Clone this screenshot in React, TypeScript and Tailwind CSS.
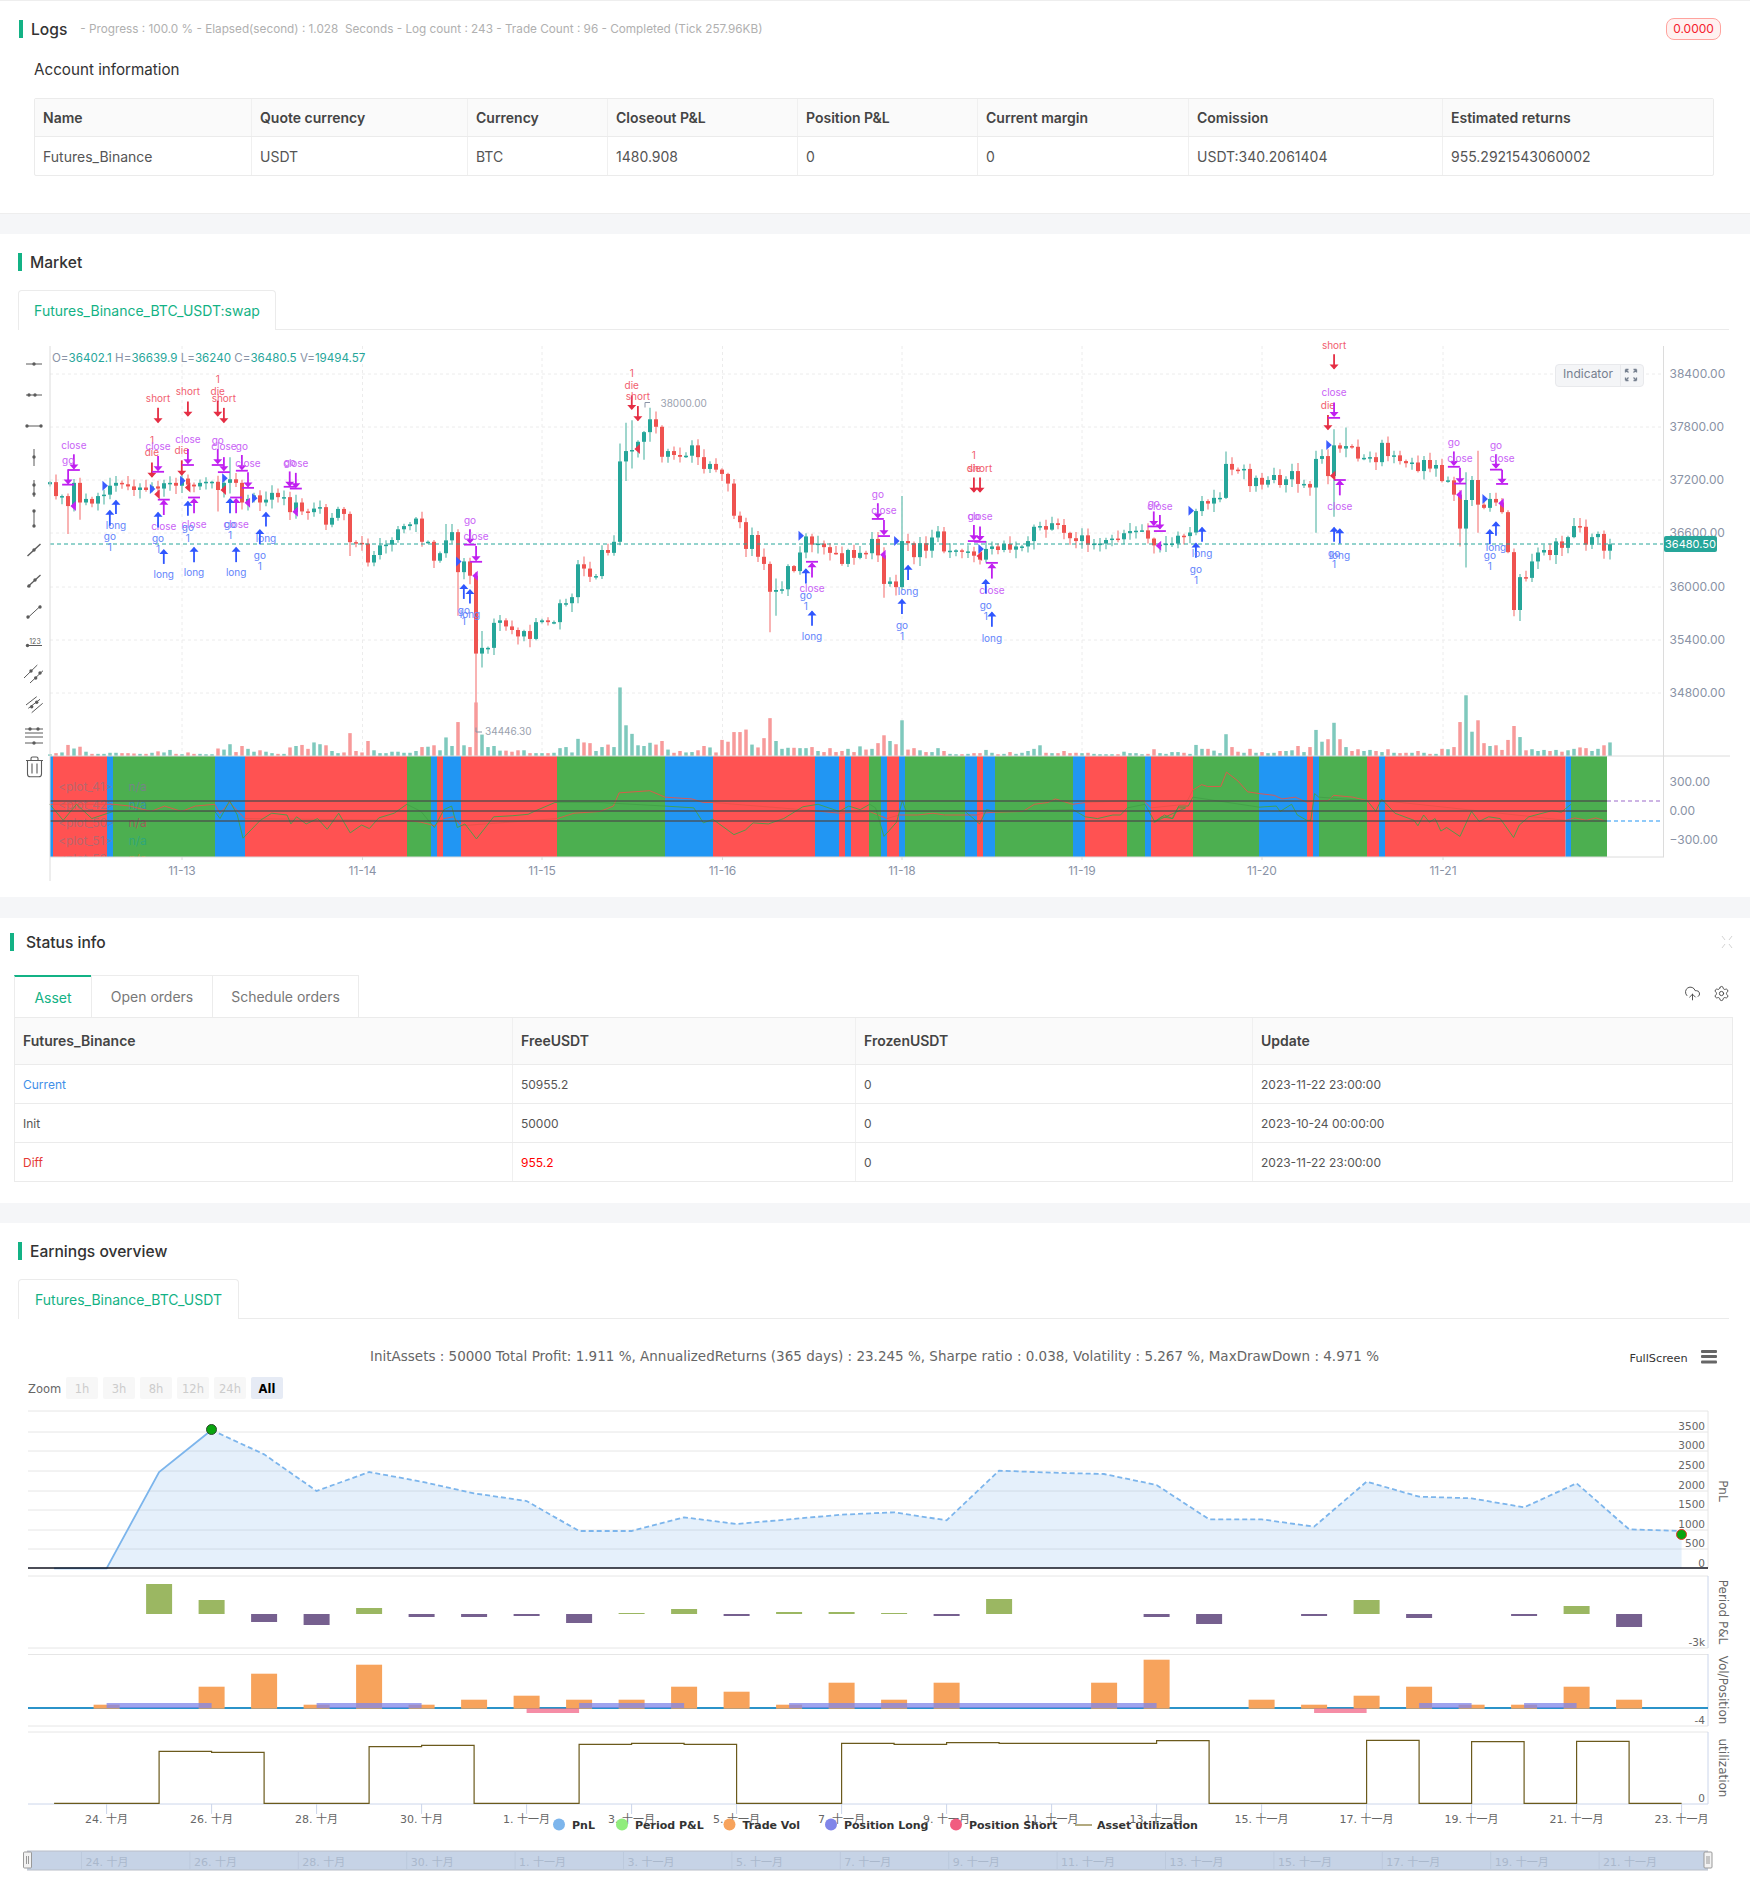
import { Fragment } from "react";
import { CloudUpload, Settings } from "lucide-react";

// ---- market chart data (read off the picture, y values in crop units: real y = 340 + v / 2.8)
const closes = [
  398, 437, 437, 465, 400, 455, 445, 458, 437, 433, 408, 400, 404, 410, 420, 413, 420, 410, 416, 401,
  400, 408, 388, 405, 410, 400, 397, 397, 420, 400, 390, 400, 455, 445, 435, 455, 447, 428, 440, 440,
  482, 455, 480, 482, 472, 468, 517, 498, 473, 487, 566, 568, 570, 623, 602, 575, 573, 560, 530, 521,
  516, 500, 565, 565, 618, 597, 561, 538, 650, 620, 660, 878, 862, 862, 792, 785, 802, 812, 830, 815,
  837, 790, 785, 790, 790, 737, 737, 720, 628, 640, 663, 661, 588, 596, 565, 340, 311, 308, 285, 258,
  222, 243, 327, 311, 322, 327, 324, 295, 328, 361, 347, 363, 375, 402, 492, 510, 585, 546, 607, 627,
  705, 700, 698, 633, 647, 595, 550, 573, 570, 580, 596, 597, 627, 588, 610, 596, 597, 557, 603, 683,
  676, 692, 563, 569, 608, 569, 590, 553, 536, 592, 590, 589, 592, 592, 604, 615, 585, 578, 588, 571,
  587, 578, 578, 563, 523, 521, 531, 513, 518, 540, 555, 563, 547, 573, 570, 570, 560, 556, 558, 541,
  535, 534, 533, 556, 575, 573, 570, 570, 548, 549, 539, 479, 451, 458, 442, 442, 347, 363, 365, 361,
  409, 386, 405, 392, 378, 406, 390, 367, 403, 403, 413, 333, 325, 381, 295, 304, 297, 299, 332, 330,
  328, 342, 288, 325, 323, 339, 345, 343, 367, 336, 360, 350, 395, 393, 433, 528, 448, 392, 461, 470,
  445, 455, 482, 594, 756, 664, 666, 620, 595, 588, 602, 564, 582, 552, 521, 523, 573, 552, 543, 590, 572,
];

const volumes = [
  5, 8, 10, 31, 21, 26, 12, 6, 6, 6, 9, 9, 8, 8, 7, 6, 6, 9, 13, 10, 17, 6, 5, 10, 6, 6, 5, 5, 21, 18,
  33, 11, 28, 20, 12, 16, 12, 8, 6, 6, 24, 28, 31, 20, 38, 33, 30, 14, 8, 10, 64, 14, 10, 42, 16, 8, 8, 12, 12, 9,
  9, 14, 25, 26, 30, 16, 52, 28, 95, 30, 25, 150, 60, 25, 28, 15, 15, 12, 16, 16, 8, 8, 8, 8, 9, 22, 25, 10, 48, 38,
  36, 14, 25, 32, 25, 192, 86, 62, 30, 28, 37, 32, 42, 18, 9, 14, 10, 11, 16, 28, 24, 10, 45, 40, 67, 67, 74, 32, 24, 50,
  106, 42, 20, 23, 23, 22, 22, 25, 14, 11, 22, 11, 14, 20, 11, 27, 18, 20, 36, 58, 42, 33, 100, 18, 22, 16, 11, 11, 22, 14,
  6, 5, 5, 6, 8, 8, 17, 9, 5, 6, 11, 6, 9, 14, 20, 30, 9, 8, 8, 14, 8, 9, 8, 9, 6, 5, 5, 5, 5, 12,
  8, 8, 5, 6, 19, 8, 6, 11, 11, 9, 6, 31, 20, 20, 15, 8, 61, 25, 12, 9, 20, 9, 11, 8, 9, 14, 14, 16, 28, 11,
  25, 73, 40, 47, 93, 47, 25, 14, 19, 14, 17, 14, 11, 19, 9, 8, 9, 9, 14, 9, 6, 6, 20, 19, 25, 95, 170, 68, 100, 36,
  28, 30, 17, 45, 84, 53, 16, 19, 14, 17, 14, 17, 12, 16, 20, 24, 22, 14, 20, 30, 38,
];

// wicks that stand out: index -> [high, low]
const wicks: Record<number, [number, number]> = {
  3: [430, 543], 5: [386, 503], 28: [380, 480], 30: [328, 430], 50: [480, 605], 66: [515, 610], 67: [515, 570],
  68: [530, 772], 71: [650, 1165], 72: [815, 917], 74: [780, 882], 95: [290, 575], 96: [232, 395], 97: [225, 360],
  99: [255, 335], 100: [190, 285], 120: [620, 818], 121: [668, 772], 139: [580, 722], 142: [437, 700],
  196: [312, 445], 211: [310, 540], 214: [250, 495], 216: [245, 328], 235: [420, 578], 236: [370, 637],
  238: [310, 540], 245: [655, 787],
};

const y = (v: number) => 340 + v / 2.8;
const seeded = (i: number) => {
  const s = Math.sin(i * 12.9898) * 43758.5453;
  return s - Math.floor(s);
};

const candles = closes.map((c, i) => {
  const o = i === 0 ? c + 6 : closes[i - 1];
  const top = Math.min(o, c);
  const bottom = Math.max(o, c);
  const w = wicks[i] ?? [top - 3 - seeded(i) * 20, bottom + 3 + seeded(i + 300) * 22];
  return { x: 50 + i * 6, up: c <= o, top, bottom, hi: w[0], lo: w[1], vol: volumes[i] ?? 6 };
});

const segments: [number, number, string][] = [
  [50, 53, "#2196f3"], [53, 107, "#ff5252"], [107, 113, "#2196f3"], [113, 215, "#4caf50"], [215, 245, "#2196f3"],
  [245, 407, "#ff5252"], [407, 431, "#4caf50"], [431, 437, "#2196f3"], [437, 443, "#ff5252"], [443, 461, "#2196f3"],
  [461, 557, "#ff5252"], [557, 665, "#4caf50"], [665, 713, "#2196f3"], [713, 815, "#ff5252"], [815, 839, "#2196f3"],
  [839, 845, "#ff5252"], [845, 851, "#2196f3"], [851, 869, "#ff5252"], [869, 881, "#4caf50"], [881, 887, "#2196f3"],
  [887, 899, "#ff5252"], [899, 905, "#2196f3"], [905, 965, "#4caf50"], [965, 977, "#2196f3"], [977, 983, "#ff5252"],
  [983, 995, "#2196f3"], [995, 1073, "#4caf50"], [1073, 1085, "#2196f3"], [1085, 1127, "#ff5252"], [1127, 1145, "#4caf50"],
  [1145, 1151, "#2196f3"], [1151, 1193, "#ff5252"], [1193, 1259, "#4caf50"], [1259, 1307, "#2196f3"], [1307, 1313, "#ff5252"],
  [1313, 1319, "#2196f3"], [1319, 1367, "#4caf50"], [1367, 1379, "#ff5252"], [1379, 1385, "#2196f3"], [1385, 1565.6, "#ff5252"],
  [1565.6, 1571, "#2196f3"], [1571, 1607, "#4caf50"],
];

const pts = (base: number, list: number[][]) => list.map(([a, b]) => `${base + a / 2.613},${y(b)}`).join(" ");

const greenLine = [
  pts(0, [[130, 1300], [165, 1345], [200, 1300], [240, 1340], [296, 1320], [561, 1320], [575, 1340], [600, 1290], [620, 1330], [635, 1395], [680, 1345], [710, 1325], [750, 1330], [760, 1355], [775, 1335], [800, 1355], [830, 1340], [855, 1370], [885, 1325], [915, 1380], [945, 1358], [965, 1368], [990, 1338], [1030, 1325], [1063, 1300], [1100, 1320], [1135, 1365], [1160, 1315], [1180, 1305], [1195, 1365], [1215, 1355], [1245, 1397], [1290, 1335], [1340, 1332], [1380, 1328], [1400, 1318], [1450, 1295]]),
  pts(600, [[0, 1295], [170, 1305], [245, 1310], [270, 1352], [295, 1342], [350, 1385], [380, 1372], [400, 1352], [440, 1355], [480, 1340], [530, 1307], [570, 1300], [625, 1320], [650, 1305], [680, 1315], [705, 1300], [720, 1310], [742, 1390], [775, 1350], [790, 1290], [800, 1320], [954, 1320], [992, 1355], [1010, 1315], [1032, 1320], [1236, 1315], [1268, 1335], [1300, 1340], [1340, 1330], [1360, 1330], [1378, 1310], [1424, 1300], [1450, 1350], [1475, 1330], [1495, 1340], [1510, 1310], [1530, 1310]]),
  pts(1150, [[10, 1350], [30, 1335], [60, 1340], [75, 1305], [100, 1305], [112, 1280], [285, 1308], [330, 1305], [340, 1320], [370, 1300], [385, 1330], [410, 1345], [420, 1345], [430, 1270], [441, 1280], [568, 1290], [590, 1320], [605, 1285], [640, 1325], [690, 1345], [700, 1360], [715, 1330], [730, 1350], [745, 1340], [760, 1375], [775, 1365], [810, 1390], [840, 1320], [860, 1348], [885, 1335], [915, 1340], [950, 1393], [965, 1358], [990, 1335], [1050, 1318], [1075, 1322], [1100, 1300]]),
].join(" ");

const redLine = [
  pts(0, [[130, 1300], [296, 1300], [340, 1305], [395, 1320], [430, 1305], [475, 1320], [510, 1305], [561, 1300], [575, 1325], [600, 1295], [640, 1340], [1063, 1345], [1100, 1350], [1135, 1360], [1160, 1340], [1185, 1335], [1205, 1360], [1456, 1340], [1500, 1325]]),
  pts(600, [[0, 1320], [35, 1305], [50, 1268], [130, 1262], [170, 1280], [240, 1285], [270, 1295], [296, 1295], [561, 1318], [625, 1325], [704, 1320], [750, 1340], [782, 1330], [830, 1330], [870, 1325], [900, 1330], [985, 1330], [1000, 1325], [1032, 1322], [1105, 1320], [1135, 1300], [1170, 1295], [1190, 1285], [1235, 1300], [1268, 1295], [1378, 1290], [1420, 1290], [1440, 1310], [1530, 1300]]),
  pts(1150, [[112, 1260], [135, 1245], [150, 1250], [185, 1250], [200, 1210], [230, 1235], [255, 1265], [285, 1270], [325, 1275], [345, 1285], [380, 1280], [410, 1295], [430, 1290], [465, 1290], [480, 1275], [530, 1280], [568, 1290], [613, 1290], [1086, 1345], [1110, 1338], [1140, 1345], [1165, 1338], [1185, 1345]]),
].join(" ");

// ---- strategy markers
type Kind = "red" | "purple" | "blue";
type Sig = [number, Kind, "d" | "u", number, number, number, number, [string, number][]];

const arrowColor = { red: "#e52e44", purple: "#c01ff0", blue: "#2f56ff" };
const textColor = { red: "#f1606f", purple: "#c963f6", blue: "#6384fb" };

// [crop offset, kind, direction, x, y from, y to, bar y, labels]
const signals: Sig[] = [
  [0, "red", "d", 413, 190, 230, 0, [["short", 165]]],
  [0, "red", "d", 491, 172, 212, 0, [["short", 145]]],
  [0, "red", "d", 585, 190, 230, 0, [["short", 165]]],
  [0, "red", "d", 569, 170, 212, 0, [["die", 145], ["1", 110]]],
  [0, "red", "d", 397, 343, 383, 0, [["die", 316], ["1", 282]]],
  [0, "red", "d", 475, 337, 377, 0, [["die", 310]]],
  [0, "purple", "d", 193, 320, 360, 364, [["close", 294]]],
  [0, "purple", "d", 178, 362, 402, 405, [["go", 337]]],
  [0, "purple", "d", 413, 325, 365, 369, [["close", 299]]],
  [0, "purple", "d", 491, 305, 345, 350, [["close", 279]]],
  [0, "purple", "d", 569, 305, 345, 350, [["go", 280]]],
  [0, "purple", "d", 585, 328, 365, 370, [["close", 299]]],
  [0, "purple", "d", 632, 322, 362, 366, [["go", 297]]],
  [0, "purple", "d", 648, 370, 410, 414, [["close", 345]]],
  [0, "purple", "d", 757, 368, 408, 411, [["go", 343]]],
  [0, "purple", "d", 773, 372, 412, 416, [["close", 347]]],
  [0, "purple", "d", 1228, 530, 568, 573, [["go", 505]]],
  [0, "purple", "d", 1244, 577, 617, 621, [["close", 551]]],
  [0, "purple", "u", 428, 450, 490, 447, [["close", 523]]],
  [0, "purple", "u", 507, 445, 485, 441, [["close", 517]]],
  [0, "purple", "u", 617, 445, 485, 441, [["close", 517]]],
  [0, "blue", "u", 303, 450, 487, 0, [["long", 518]]],
  [0, "blue", "u", 287, 478, 520, 0, [["go", 549], ["1", 580]]],
  [0, "blue", "u", 413, 484, 525, 0, [["go", 556], ["1", 587]]],
  [0, "blue", "u", 428, 588, 627, 0, [["long", 657]]],
  [0, "blue", "u", 491, 453, 492, 0, [["go", 525], ["1", 556]]],
  [0, "blue", "u", 507, 582, 622, 0, [["long", 652]]],
  [0, "blue", "u", 601, 445, 485, 0, [["go", 517], ["1", 548]]],
  [0, "blue", "u", 617, 582, 622, 0, [["long", 652]]],
  [0, "blue", "u", 695, 484, 522, 0, [["long", 555]]],
  [0, "blue", "u", 679, 532, 572, 0, [["go", 603], ["1", 634]]],
  [0, "blue", "u", 1212, 686, 725, 0, [["go", 757], ["1", 788]]],
  [0, "blue", "u", 1228, 700, 738, 0, [["long", 769]]],
  [600, "red", "d", 83, 155, 193, 0, [["die", 128], ["1", 94]]],
  [600, "red", "d", 99, 185, 225, 0, [["short", 159]]],
  [600, "red", "d", 977, 385, 425, 0, [["die", 359], ["1", 324]]],
  [600, "red", "d", 993, 385, 425, 0, [["short", 360]]],
  [600, "purple", "d", 726, 457, 497, 501, [["go", 432]]],
  [600, "purple", "d", 742, 504, 544, 549, [["close", 478]]],
  [600, "purple", "d", 977, 518, 558, 563, [["go", 495]]],
  [600, "purple", "d", 993, 522, 560, 565, [["close", 495]]],
  [600, "purple", "d", 1447, 480, 518, 522, [["go", 457]]],
  [600, "purple", "d", 1463, 490, 528, 535, [["close", 465]]],
  [600, "purple", "u", 554, 625, 665, 621, [["close", 697]]],
  [600, "purple", "u", 1024, 628, 668, 624, [["close", 700]]],
  [600, "blue", "u", 538, 642, 682, 0, [["go", 714], ["1", 745]]],
  [600, "blue", "u", 554, 760, 800, 0, [["long", 831]]],
  [600, "blue", "u", 789, 727, 767, 0, [["go", 798], ["1", 830]]],
  [600, "blue", "u", 805, 632, 672, 0, [["long", 703]]],
  [600, "blue", "u", 1008, 672, 710, 0, [["go", 743], ["1", 773]]],
  [600, "blue", "u", 1024, 763, 803, 0, [["long", 835]]],
  [1150, "red", "d", 481, 40, 80, 0, [["short", 15]]],
  [1150, "red", "d", 465, 210, 250, 0, [["die", 184]]],
  [1150, "purple", "d", 481, 175, 213, 218, [["close", 148]]],
  [1150, "purple", "d", 794, 312, 350, 355, [["go", 287]]],
  [1150, "purple", "d", 810, 358, 398, 402, [["close", 333]]],
  [1150, "purple", "d", 904, 320, 358, 363, [["go", 295]]],
  [1150, "purple", "d", 920, 363, 400, 403, [["close", 333]]],
  [1150, "purple", "u", 496, 395, 435, 392, [["close", 467]]],
  [1150, "blue", "u", 120, 570, 610, 0, [["go", 642], ["1", 674]]],
  [1150, "blue", "u", 136, 526, 565, 0, [["long", 597]]],
  [1150, "blue", "u", 481, 526, 565, 0, [["go", 598], ["1", 628]]],
  [1150, "blue", "u", 496, 530, 570, 0, [["long", 602]]],
  [1150, "blue", "u", 888, 532, 572, 0, [["go", 603], ["1", 634]]],
  [1150, "blue", "u", 904, 510, 548, 0, [["long", 580]]],
];

// [crop offset, x of the point, y, colour, points right]
const triangles: [number, number, number, string, boolean][] = [
  [0, 282, 408, "#3a5cff", true], [0, 406, 417, "#3a5cff", true], [0, 485, 394, "#3a5cff", true], [0, 595, 387, "#3a5cff", true],
  [0, 673, 443, "#3a5cff", true], [0, 1206, 620, "#3a5cff", true], [600, 533, 548, "#3a5cff", true], [600, 783, 563, "#3a5cff", true],
  [600, 1003, 585, "#3a5cff", true], [1150, 115, 478, "#3a5cff", true], [1150, 475, 294, "#3a5cff", true], [1150, 883, 445, "#3a5cff", true],
  [0, 403, 432, "#e8344a", false], [0, 483, 413, "#e8344a", false], [0, 576, 420, "#e8344a", false], [600, 90, 305, "#e8344a", false],
  [600, 984, 605, "#e8344a", false], [1150, 470, 380, "#e8344a", false],
  [0, 184, 465, "#c224f2", false], [0, 639, 456, "#c224f2", false], [0, 764, 481, "#c224f2", false], [0, 1234, 660, "#c224f2", false],
  [600, 732, 601, "#c224f2", false], [600, 1452, 576, "#c224f2", false], [1150, 800, 433, "#c224f2", false], [1150, 910, 457, "#c224f2", false],
];

function SignalMark({ sig }: { sig: Sig }) {
  const [base, kind, dir, zx, z1, z2, bar, labels] = sig;
  const x = base + zx / 2.613;
  const a = y(z1);
  const b = y(z2);
  const color = arrowColor[kind];
  return (
    <g>
      <line x1={x} x2={x} y1={a} y2={b} stroke={color} strokeWidth={1.8} />
      {dir === "d" ? (
        <polygon points={`${x - 4.5},${b - 4} ${x + 4.5},${b - 4} ${x},${b + 1}`} fill={color} />
      ) : (
        <polygon points={`${x - 4.5},${a + 4} ${x + 4.5},${a + 4} ${x},${a - 1}`} fill={color} />
      )}
      {bar > 0 && <line x1={x - 6} x2={x + 6} y1={y(bar)} y2={y(bar)} stroke={color} strokeWidth={1.8} />}
      {labels.map(([t, zy], i) => (
        <text key={i} x={x} y={y(zy) + 3.5} textAnchor="middle" fontSize={10} fill={textColor[kind]}>
          {t}
        </text>
      ))}
    </g>
  );
}

function Toolbar() {
  const s = "#5b5b5b";
  const Dot = ({ x, y }: { x: number; y: number }) => <circle cx={x} cy={y} r={1.7} fill={s} />;
  const H = ({ y }: { y: number }) => <line x1={26} x2={42} y1={y} y2={y} stroke={s} strokeWidth={1} />;
  const V = ({ a, b }: { a: number; b: number }) => <line x1={34} x2={34} y1={a} y2={b} stroke={s} strokeWidth={1} />;
  const D = ({ cy, w = 1 }: { cy: number; w?: number }) => (
    <line x1={27.5} x2={40.5} y1={cy + 6} y2={cy - 6} stroke={s} strokeWidth={w} />
  );
  return (
    <g>
      <H y={364} />
      <Dot x={34} y={364} />
      <H y={395} />
      <Dot x={29} y={395} />
      <Dot x={35} y={395} />
      <H y={426} />
      <Dot x={27} y={426} />
      <Dot x={41} y={426} />
      <V a={449} b={466} />
      <Dot x={34} y={457} />
      <V a={480} b={497} />
      <Dot x={34} y={485} />
      <Dot x={34} y={494} />
      <V a={511} b={527} />
      <Dot x={34} y={511} />
      <Dot x={34} y={526} />
      <D cy={550} w={1.4} />
      <Dot x={34} y={550} />
      <D cy={581} w={1.2} />
      <Dot x={29} y={586} />
      <Dot x={35} y={580} />
      <D cy={612} />
      <Dot x={28} y={617} />
      <Dot x={40} y={607} />
      <text x={35} y={644} fontSize={7} fill={s} textAnchor="middle">123</text>
      <line x1={27} x2={42} y1={645.5} y2={645.5} stroke={s} strokeWidth={1} />
      <Dot x={27.5} y={645.5} />
      {/* parallel lines */}
      <line x1={24} x2={37.3} y1={678} y2={665} stroke={s} strokeWidth={1} />
      <line x1={30} x2={43} y1={683} y2={670.7} stroke={s} strokeWidth={1} />
      <Dot x={31} y={671} />
      <Dot x={35.7} y={678} />
      <Dot x={40} y={673} />
      {/* channel */}
      <line x1={26} x2={36.7} y1={705} y2={696.7} stroke={s} strokeWidth={1} />
      <line x1={28.3} x2={40} y1={708.3} y2={699.3} stroke={s} strokeWidth={1} />
      <line x1={31.7} x2={42.7} y1={712.7} y2={703.3} stroke={s} strokeWidth={1} />
      <Dot x={31.7} y={706.7} />
      <Dot x={36.7} y={702.3} />
      {[729, 733, 737, 743].map((ly) => (
        <line key={ly} x1={25} x2={43} y1={ly} y2={ly} stroke={s} strokeWidth={1} />
      ))}
      <Dot x={30} y={729} />
      <Dot x={38} y={729} />
      <Dot x={34} y={743} />
      <path
        d="M26 760.500h17M31 760.500v-2q0-1.500 1.500-1.500h4q1.500 0 1.500 1.500v2M27.500 760.500v13.500q0 2.800 2.800 2.800h8.400q2.800 0 2.800-2.800v-13.500M32 763.500v10M37 763.500v10"
        fill="none"
        stroke={s}
        strokeWidth={1.1}
      />
    </g>
  );
}

const priceTicks = [
  ["38400.00", 374], ["37800.00", 427], ["37200.00", 480], ["36600.00", 533], ["36000.00", 587], ["35400.00", 640], ["34800.00", 693],
] as const;
const dayTicks = [
  ["11-13", 182], ["11-14", 362.5], ["11-15", 542], ["11-16", 722.5], ["11-18", 902], ["11-19", 1082], ["11-20", 1262], ["11-21", 1443],
] as const;

function MarketChart() {
  return (
    <div className="relative h-[567px]">
      <svg viewBox="0 330 1750 567" className="block h-[567px] w-[1750px]" fontFamily="Inter, sans-serif">
        {priceTicks.map(([, py]) => (
          <line key={py} x1={50} x2={1664} y1={py} y2={py} stroke="#ececec" strokeDasharray="3 3" />
        ))}
        {dayTicks.map(([, dx]) => (
          <line key={dx} x1={dx} x2={dx} y1={346} y2={756} stroke="#ececec" strokeDasharray="3 3" />
        ))}

        {candles.map((c) => (
          <rect key={c.x} x={c.x - 1.75} width={3.5} y={756 - c.vol / 2.8} height={c.vol / 2.8} fill={c.up ? "#7fc9bd" : "#f79a9a"} />
        ))}
        {candles.map((c) => (
          <Fragment key={c.x}>
            <line x1={c.x} x2={c.x} y1={y(c.hi)} y2={Math.min(y(c.lo), 756)} stroke={c.up ? "#7fc9bd" : "#f79a9a"} strokeWidth={1.5} />
            <rect
              x={c.x - 2}
              width={4}
              y={y(c.top)}
              height={Math.max((c.bottom - c.top) / 2.8, 1.5)}
              fill={c.up ? "#26a69a" : "#ef5350"}
            />
          </Fragment>
        ))}

        <line x1={50} x2={1664} y1={544} y2={544} stroke="#26a69a" strokeDasharray="4 3" />

        {signals.map((sig, i) => (
          <SignalMark key={i} sig={sig} />
        ))}
        {triangles.map(([base, zx, zy, fill, right], i) => {
          const tx = base + zx / 2.613;
          const ty = y(zy);
          const back = right ? tx - 5.5 : tx + 5.5;
          return <polygon key={i} points={`${tx},${ty} ${back},${ty - 5} ${back},${ty + 5}`} fill={fill} />;
        })}

        <path d="M476 727.5v4.5h6" fill="none" stroke="#8a93a6" strokeWidth={1} />
        <text x={485} y={735} fontSize={10} fill="#9aa1ae">34446.30</text>
        <path d="M650 402.500h-5v5" fill="none" stroke="#8a93a6" strokeWidth={1} />
        <text x={660.500} y={406.500} fontSize={10} fill="#9aa1ae">38000.00</text>

        {segments.map(([a, b, fill]) => (
          <rect key={a} x={a} width={b - a} y={756} height={101} fill={fill} />
        ))}
        {[["<plot_41>", 787, "#8a6fa0"], ["<plot_42>", 805, "#2f86c8"], ["<plot_50>", 823, "#c2345e"], ["<plot_51>", 841, "#1fa38f"], ["<plot_52>", 859, "#c98a1e"]].map(([t, ly, col]) => (
          <Fragment key={t}>
            <text x={58} y={Number(ly) + 4} fontSize={12} fill="#787b86" fillOpacity={0.55}>{t}</text>
            <text x={128.500} y={Number(ly) + 4} fontSize={12} fill={col} fillOpacity={0.7}>n/a</text>
          </Fragment>
        ))}
        <rect x={51} y={857} width={200} height={12} fill="#fff" />
        <polyline points={redLine} fill="none" stroke="#e8524a" strokeWidth={0.9} />
        <polyline points={greenLine} fill="none" stroke="#43a047" strokeWidth={0.9} />
        {[801, 811, 821].map((ly) => (
          <line key={ly} x1={50} x2={1607} y1={ly} y2={ly} stroke="#4a4a4a" strokeOpacity={0.85} strokeWidth={1.6} />
        ))}
        <line x1={1607} x2={1663.5} y1={801} y2={801} stroke="#cdb4e4" strokeWidth={2} strokeDasharray="4 3" />
        <line x1={1607} x2={1663.5} y1={821} y2={821} stroke="#90caf9" strokeWidth={2} strokeDasharray="4 3" />

        <line x1={50} x2={50} y1={346} y2={881} stroke="#dcdcdc" />
        <line x1={1663.5} x2={1663.5} y1={346} y2={857} stroke="#dcdcdc" />
        <line x1={50} x2={1730} y1={756} y2={756} stroke="#dcdcdc" />
        <line x1={50} x2={1664} y1={857} y2={857} stroke="#dcdcdc" />

        {priceTicks.map(([t, py]) => (
          <text key={t} x={1669.500} y={py + 3.500} fontSize={12} fill="#8a93a6">{t}</text>
        ))}
        {[["300.00", 782], ["0.00", 811], ["−300.00", 840]].map(([t, py]) => (
          <text key={t} x={1669.500} y={Number(py) + 3.500} fontSize={12} fill="#8a93a6">{t}</text>
        ))}
        {dayTicks.map(([t, dx]) => (
          <Fragment key={t}>
            <line x1={dx} x2={dx} y1={857} y2={860} stroke="#dcdcdc" />
            <text x={dx} y={875} fontSize={12} textAnchor="middle" fill="#8a93a6">{t}</text>
          </Fragment>
        ))}

        <text x={52} y={361.500} fontSize={11.600} fill="#26a69a">
          <tspan fill="#8a93a6">O=</tspan>36402.1 <tspan fill="#8a93a6">H=</tspan>36639.9 <tspan fill="#8a93a6">L=</tspan>36240{" "}
          <tspan fill="#8a93a6">C=</tspan>36480.5 <tspan fill="#8a93a6">V=</tspan>19494.57
        </text>
        <Toolbar />
      </svg>

      {/* last price tag and the indicator button lie over the canvas */}
      <div className="absolute left-[1664px] top-[206px] flex h-[15.500px] w-[53px] items-center justify-center rounded-[2px] bg-[#26a69a] text-[11px] text-white">
        36480.50
      </div>
      <div className="absolute left-[1555px] top-[33.500px] flex h-[23px] w-[89px] items-center rounded-[4px] border border-[#e8e9ec] bg-[#f4f5f7] text-[12px] text-[#76808f]">
        <span className="flex h-full w-[65px] items-center justify-center border-r border-[#e8e9ec] pb-[2px]">Indicator</span>
        <svg viewBox="0 0 14 14" className="mb-[1px] ml-[3px] h-[14px] w-[14px]" fill="none" stroke="#76808f" strokeWidth="1.3">
          <path d="M1.500 1.500l3 3M1.500 1.500h3M1.500 1.500v3M12.500 1.500l-3 3M12.500 1.500h-3M12.500 1.500v3M1.500 12.500l3-3M1.500 12.500h3M1.500 12.500v-3M12.500 12.500l-3-3M12.500 12.500h-3M12.500 12.500v-3" />
        </svg>
      </div>
    </div>
  );
}

// ---- earnings chart
const kx = (k: number) => 54.1 + 52.5 * k;
const pnlY = [745, 745, 456, 330, 403, 513, 456, 485, 520, 543, 633, 633, 592, 612, 598, 584, 577, 601, 452, 458, 462, 495, 598, 598, 620, 485, 530, 535, 562, 490, 628, 633];
const py = (z: number) => 1320 + z / 3;
const pnlPath = pnlY.map((z, k) => `${kx(k)},${py(z)}`);

const periodPnl: [number, number][] = [
  [2, 30], [3, 14], [4, -8], [5, -11], [6, 6], [7, -3], [8, -3], [9, -2], [10, -9], [11, 1], [12, 5], [13, -2], [14, 2], [15, 2],
  [16, 1], [17, -2], [18, 15], [21, -3], [22, -10], [24, -2], [25, 14], [26, -4], [28, -2], [29, 8], [30, -13],
];
const tradeVol: [number, number][] = [
  [1, 4], [3, 22], [4, 35], [5, 4], [6, 44], [7, 4], [8, 9], [9, 13], [10, 9], [11, 9], [12, 22], [13, 17], [14, 4], [15, 26],
  [16, 9], [17, 26], [20, 26], [21, 49], [23, 9], [24, 4], [25, 13], [26, 22], [27, 4], [28, 4], [29, 22], [30, 9],
];
const utilSteps: [number, number][] = [
  [0, 610], [2, 454], [3, 457], [4, 610], [6, 440], [7, 436], [8, 610], [10, 433], [11, 430], [12, 433], [13, 610], [15, 430], [16, 433], [17, 428], [18, 430],
  [21, 422], [22, 610], [25, 421], [26, 610], [27, 425], [28, 610], [29, 424], [30, 610], [31, 610],
];
const utilPath = utilSteps
  .map(([k, z], i) => {
    const prev = i > 0 ? utilSteps[i - 1][1] : z;
    return `${kx(k)},${1600 + prev / 3} ${kx(k)},${1600 + z / 3}`;
  })
  .join(" ");

const axisLabels: [string, number][] = [
  ["3500", 1426], ["3000", 1445], ["2500", 1465], ["2000", 1485], ["1500", 1504], ["1000", 1524], ["500", 1543], ["0", 1563],
];
const dateLabels = ["24. 十月", "26. 十月", "28. 十月", "30. 十月", "1. 十一月", "3. 十一月", "5. 十一月", "7. 十一月", "9. 十一月", "11. 十一月", "13. 十一月", "15. 十一月", "17. 十一月", "19. 十一月", "21. 十一月", "23. 十一月"];
const legend: [string, number, string][] = [
  ["PnL", 559, "#7cb5ec"], ["Period P&L", 622, "#90ed7d"], ["Trade Vol", 729.500, "#f7a35c"], ["Position Long", 831, "#8085e9"], ["Position Short", 956, "#f15c80"],
];
const zoomButtons: [string, number][] = [["1h", 66], ["3h", 103], ["8h", 140], ["12h", 177], ["24h", 214], ["All", 251]];

function EarningsChart() {
  const hc = "'DejaVu Sans', 'Noto Sans CJK SC', sans-serif";
  return (
    <svg viewBox="0 1319 1750 581" className="block h-[581px] w-[1750px]" fontFamily={hc}>
      <text x={874.500} y={1360.500} textAnchor="middle" fontSize={13.500} fill="#666">
        InitAssets : 50000 Total Profit: 1.911 %, AnnualizedReturns (365 days) : 23.245 %, Sharpe ratio : 0.038, Volatility : 5.267 %, MaxDrawDown : 4.971 %
      </text>
      <text x={1629.500} y={1362} fontSize={11.300} fill="#333">FullScreen</text>
      <g fill="#666">
        <rect x={1701} y={1350} width={16} height={3} rx={1} />
        <rect x={1701} y={1355} width={16} height={3} rx={1} />
        <rect x={1701} y={1360.500} width={16} height={3} rx={1} />
      </g>

      <text x={28} y={1393} fontSize={11.500} fill="#666">Zoom</text>
      {zoomButtons.map(([t, bx]) => (
        <Fragment key={t}>
          <rect x={bx} y={1377} width={32} height={22} rx={2} fill={t === "All" ? "#e6ebf5" : "#f7f7f7"} />
          <text x={bx + 16} y={1393} textAnchor="middle" fontSize={11.500} fontWeight={t === "All" ? 700 : 400} fill={t === "All" ? "#000" : "#ccc"}>{t}</text>
        </Fragment>
      ))}

      {/* PnL */}
      <line x1={28} x2={1708} y1={1411} y2={1411} stroke="#e6e6e6" />
      <line x1={1708} x2={1708} y1={1411} y2={1568} stroke="#e6e6e6" />
      {[1432, 1451, 1471, 1491, 1510, 1530, 1549].map((gy) => (
        <line key={gy} x1={28} x2={1708} y1={gy} y2={gy} stroke="#e6e6e6" />
      ))}
      <polygon points={`${pnlPath.join(" ")} ${kx(31)},1568 ${kx(0)},1568`} fill="#7cb5ec" fillOpacity={0.2} />
      <polyline points={pnlPath.slice(0, 4).join(" ")} fill="none" stroke="#7cb5ec" strokeWidth={1.800} />
      <polyline points={pnlPath.slice(3).join(" ")} fill="none" stroke="#7cb5ec" strokeWidth={1.800} strokeDasharray="5 3" />
      <line x1={28} x2={1708} y1={1568} y2={1568} stroke="#10131f" strokeWidth={1.300} />
      <circle cx={211.500} cy={1429.500} r={5} fill="#09a50e" stroke="#2d4a2d" />
      <circle cx={1681.500} cy={1534.500} r={5} fill="#09a50e" stroke="#e8392e" />
      {axisLabels.map(([t, ay]) => (
        <text key={t} x={1705} y={ay + 4} textAnchor="end" fontSize={10.500} fill="#666">{t}</text>
      ))}
      <text transform="rotate(90 1719 1491)" x={1719} y={1491} textAnchor="middle" fontSize={12} fill="#666">PnL</text>

      {/* Period P&L */}
      <line x1={28} x2={1708} y1={1576} y2={1576} stroke="#e6e6e6" />
      <line x1={28} x2={1708} y1={1648} y2={1648} stroke="#e6e6e6" />
      <line x1={1708} x2={1708} y1={1576} y2={1648} stroke="#ccd6eb" />
      {periodPnl.map(([k, v]) => (
        <rect key={k} x={kx(k) - 13} width={26} y={v > 0 ? 1614 - v : 1614} height={Math.abs(v)} fill={v > 0 ? "#9bb762" : "#76608f"} />
      ))}
      <text x={1705} y={1646} textAnchor="end" fontSize={10.500} fill="#666">-3k</text>
      <text transform="rotate(90 1719 1612)" x={1719} y={1612} textAnchor="middle" fontSize={12} fill="#666">Period P&amp;L</text>

      {/* Vol / Position */}
      <line x1={28} x2={1708} y1={1654.500} y2={1654.500} stroke="#e6e6e6" />
      <line x1={28} x2={1708} y1={1726} y2={1726} stroke="#e6e6e6" />
      <line x1={1708} x2={1708} y1={1654} y2={1726} stroke="#ccd6eb" />
      <line x1={28} x2={1708} y1={1708} y2={1708} stroke="#2b93c9" strokeWidth={2} />
      {tradeVol.map(([k, v]) => (
        <rect key={k} x={kx(k) - 13} width={26} y={1708.700 - v} height={v} fill="#f7a35c" />
      ))}
      {[[1, 3], [5, 7], [10, 12], [14, 21], [26, 27], [28, 29]].map(([a, b]) => (
        <rect key={a} x={kx(a)} width={kx(b) - kx(a)} y={1703} height={5} fill="#8085e9" fillOpacity={0.75} />
      ))}
      {[[9, 10], [24, 25]].map(([a, b]) => (
        <rect key={a} x={kx(a)} width={kx(b) - kx(a)} y={1708.500} height={4.500} fill="#f15c80" fillOpacity={0.7} />
      ))}
      <text x={1705} y={1724} textAnchor="end" fontSize={10.500} fill="#666">-4</text>
      <text transform="rotate(90 1719 1690)" x={1719} y={1690} textAnchor="middle" fontSize={12} fill="#666">Vol/Position</text>

      {/* Asset utilization */}
      <line x1={28} x2={1708} y1={1732} y2={1732} stroke="#e6e6e6" />
      <line x1={28} x2={1708} y1={1804} y2={1804} stroke="#ccd6eb" />
      <line x1={1708} x2={1708} y1={1732} y2={1804} stroke="#ccd6eb" />
      <polyline points={utilPath} fill="none" stroke="#6b5a1c" strokeWidth={1.200} />
      <text x={1705} y={1802} textAnchor="end" fontSize={10.500} fill="#666">0</text>
      <text transform="rotate(90 1719 1768)" x={1719} y={1768} textAnchor="middle" fontSize={12} fill="#666">utilization</text>

      {dateLabels.map((t, i) => {
        const lx = kx(1 + i * 2);
        return (
          <Fragment key={t}>
            <line x1={lx} x2={lx} y1={1804} y2={1814} stroke="#ccd6eb" />
            <text x={lx} y={1823} textAnchor="middle" fontSize={11} fill="#666">{t}</text>
          </Fragment>
        );
      })}

      {legend.map(([t, lx, col]) => (
        <Fragment key={t}>
          <circle cx={lx} cy={1824.500} r={6} fill={col} />
          <text x={lx + 13} y={1829} fontSize={11} fontWeight={700} fill="#333">{t}</text>
        </Fragment>
      ))}
      <line x1={1075} x2={1092} y1={1825} y2={1825} stroke="#b2a97f" strokeWidth={2} />
      <text x={1097} y={1829} fontSize={11} fontWeight={700} fill="#333">Asset utilization</text>

      {/* navigator */}
      <rect x={27} y={1851} width={1681} height={19} fill="#c6d3e6" />
      <line x1={27} x2={1708} y1={1851} y2={1851} stroke="#b9bec8" />
      <line x1={27} x2={1708} y1={1870} y2={1870} stroke="#b9bec8" />
      {dateLabels.slice(0, 15).map((t, i) => {
        const nx = 81.500 + 108.400 * i;
        return (
          <Fragment key={t}>
            <line x1={nx} x2={nx} y1={1851} y2={1870} stroke="#bcc9dc" />
            <text x={nx + 4} y={1866} fontSize={11} fill="#aab8cc">{t}</text>
          </Fragment>
        );
      })}
      {[23.500, 1704].map((hx) => (
        <g key={hx}>
          <rect x={hx} y={1852} width={8} height={16} rx={1} fill="#f2f2f2" stroke="#999" />
          <path d={`M${hx + 3} 1856v8M${hx + 5} 1856v8`} stroke="#999" />
        </g>
      ))}
    </svg>
  );
}

// ---- page pieces
function SectionTitle({ title, left = "pl-[18px]", gap = "gap-[8px]" }: { title: string; left?: string; gap?: string }) {
  return (
    <div className={`flex items-center ${gap} ${left}`}>
      <span className="h-[18px] w-[4px] bg-[#13b285]" />
      <h2 className="translate-y-[1px] text-[15.600px] font-medium leading-[18px] text-[#333]">{title}</h2>
    </div>
  );
}

function TabLine({ label, width }: { label: string; width: string }) {
  return (
    <div className="ml-[18px] mr-[21px] h-[40px] border-b border-[#ebebeb]">
      <div className={`flex h-[40px] ${width} items-center justify-center rounded-t-[4px] border border-b-0 border-[#ebebeb] bg-white text-[14px] text-[#13b285]`}>
        {label}
      </div>
    </div>
  );
}

const accountHead = ["Name", "Quote currency", "Currency", "Closeout P&L", "Position P&L", "Current margin", "Comission", "Estimated returns"];
const accountRow = ["Futures_Binance", "USDT", "BTC", "1480.908", "0", "0", "USDT:340.2061404", "955.2921543060002"];
const assetRows = [
  ["Current", "50955.2", "0", "2023-11-22 23:00:00"],
  ["Init", "50000", "0", "2023-10-24 00:00:00"],
  ["Diff", "955.2", "0", "2023-11-22 23:00:00"],
];

export default function App() {
  return (
    <div className="h-[1900px] w-[1750px] overflow-hidden bg-[#f5f6f8] font-['Inter',sans-serif] text-[#444]">
      {/* Logs */}
      <section className="h-[214px] border-y border-[#eeeeee] bg-white pt-[19px]">
        <div className="flex h-[18px] items-center pl-[19px] pr-[29px]">
          <span className="mr-[8px] h-[18px] w-[4px] bg-[#13b285]" />
          <h2 className="mr-[13px] translate-y-[1px] text-[15.600px] font-medium leading-[18px] text-[#333]">Logs</h2>
          <p className="translate-y-[0.5px] whitespace-pre text-[11.750px] text-[#b0b0b0]">- Progress : 100.0 % - Elapsed(second) : 1.028  Seconds - Log count : 243 - Trade Count : 96 - Completed (Tick 257.96KB)</p>
          <span className="ml-auto flex h-[22px] w-[55px] items-center justify-center rounded-[8px] border border-[#ffa39e] bg-[#fff1f0] text-[12px] text-[#f5222d]">0.0000</span>
        </div>
        <h3 className="mt-[21px] h-[22px] pl-[34px] text-[15.200px] leading-[22px] text-[#333]">Account information</h3>
        <div className="ml-[34px] mt-[17px] w-[1680px] rounded-[2px] border border-[#ebebeb] text-[14px]">
          <div className="grid h-[38px] grid-cols-[217px_216px_140px_190px_180px_211px_254px_1fr] border-b border-[#ebebeb] bg-[#fafafa] font-semibold">
            {accountHead.map((h) => (
              <div key={h} className="flex items-center border-r border-[#f0f0f0] px-[8px] last:border-r-0">{h}</div>
            ))}
          </div>
          <div className="grid h-[38px] grid-cols-[217px_216px_140px_190px_180px_211px_254px_1fr] text-[#555]">
            {accountRow.map((c, i) => (
              <div key={i} className="flex items-center border-r border-[#f0f0f0] px-[8px] last:border-r-0">{c}</div>
            ))}
          </div>
        </div>
      </section>

      {/* Market */}
      <section className="mt-[20px] h-[663px] bg-white pt-[19px]">
        <SectionTitle title="Market" />
        <div className="mt-[19px]">
          <TabLine label="Futures_Binance_BTC_USDT:swap" width="w-[258px]" />
        </div>
        <MarketChart />
      </section>

      {/* Status info */}
      <section className="mt-[21px] h-[285px] bg-white pt-[15px]">
        <div className="flex items-center justify-between pr-[16px]">
          <SectionTitle title="Status info" left="pl-[10px]" gap="gap-[12px]" />
          <svg viewBox="0 0 14 14" className="h-[14px] w-[14px]" fill="none" stroke="#d4d4d4" strokeWidth="1">
            <path d="M2 1l3 4M12 1L9 5M2 13l3-4M12 13L9 9" />
          </svg>
        </div>
        <div className="mt-[24px] flex h-[42px] items-end justify-between pl-[14px] pr-[20px]">
          <div className="flex h-[42px] text-[14px] text-[#777]">
            <div className="flex w-[77px] items-center justify-center border-l border-t-2 border-[#13b285] border-l-[#ececec] text-[#13b285]">Asset</div>
            <div className="flex w-[122px] items-center justify-center border-x border-t border-[#ececec]">Open orders</div>
            <div className="flex w-[146px] items-center justify-center border-r border-t border-[#ececec]">Schedule orders</div>
          </div>
          <div className="mb-[15px] flex items-center gap-[12px] text-[#444]">
            <CloudUpload size={17} strokeWidth={1.3} />
            <Settings size={17} strokeWidth={1.3} />
          </div>
        </div>
        <div className="ml-[14px] w-[1719px] border border-[#ebebeb] text-[12px] text-[#555]">
          <div className="grid h-[47px] grid-cols-[498px_343px_397px_1fr] border-b border-[#ebebeb] bg-[#fafafa] text-[14px] font-semibold text-[#444]">
            {["Futures_Binance", "FreeUSDT", "FrozenUSDT", "Update"].map((h) => (
              <div key={h} className="flex items-center border-r border-[#f0f0f0] px-[8px] pb-[1px] last:border-r-0">{h}</div>
            ))}
          </div>
          {assetRows.map((row) => (
            <div key={row[0]} className="grid h-[39px] grid-cols-[498px_343px_397px_1fr] border-b border-[#ebebeb] last:h-[38px] last:border-b-0">
              {row.map((c, i) => (
                <div
                  key={i}
                  className={`flex items-center border-r border-[#f0f0f0] px-[8px] pt-[1px] last:border-r-0 ${
                    i === 0 && row[0] === "Current" ? "text-[#3f8fe8]" : ""
                  } ${i === 0 && row[0] === "Diff" ? "text-[#e53935]" : ""} ${i === 1 && row[0] === "Diff" ? "text-[#ff0000]" : ""}`}
                >
                  {c}
                </div>
              ))}
            </div>
          ))}
        </div>
      </section>

      {/* Earnings overview */}
      <section className="mt-[20px] h-[677px] bg-white pt-[19px]">
        <SectionTitle title="Earnings overview" />
        <div className="mt-[19px]">
          <TabLine label="Futures_Binance_BTC_USDT" width="w-[221px]" />
        </div>
        <EarningsChart />
      </section>
    </div>
  );
}
